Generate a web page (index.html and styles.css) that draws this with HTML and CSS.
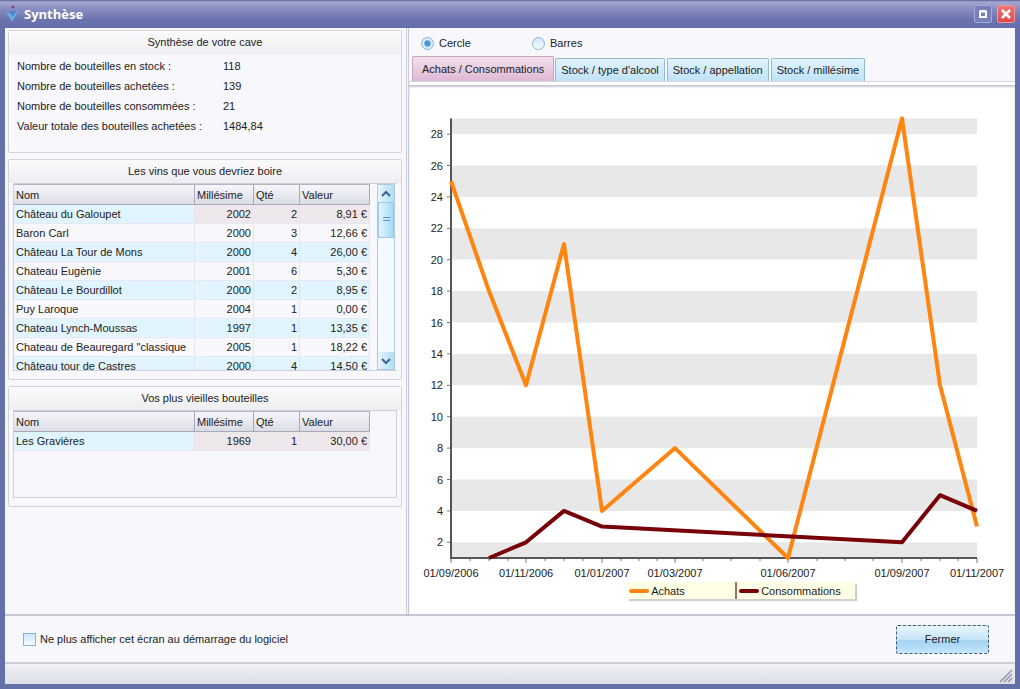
FILE: index.html
```
<!DOCTYPE html>
<html lang="fr">
<head>
  <meta charset="UTF-8" />
  <meta name="viewport" content="width=device-width, initial-scale=1.0"/>
  <title>Synthèse</title>
  <link rel="stylesheet" href="styles.css">
</head>

<body>
  <div class="window">
    <header class="titlebar">
      <svg class="logo" width="16" height="18" viewBox="0 0 16 18">
        <path d="M1 7L7 17L14 5L8 10Z" fill="#68aee4"/>
        <path d="M4 6L8 12L11 6Z" fill="#4a86cc"/>
        <circle cx="8" cy="2" r="1.5" fill="#84476f"/>
      </svg>
      <h1>Synthèse</h1>
      <button class="win-btn" aria-label="Agrandir">
        <svg width="16" height="16" viewBox="0 0 16 16"><path d="M5 5.5H11V11H5Z M5 5H11" fill="none" stroke="#fff" stroke-width="2"/></svg>
      </button>
      <button class="win-btn close" aria-label="Quitter">
        <svg width="16" height="16" viewBox="0 0 16 16"><path d="M4 4L12 12M12 4L4 12" stroke="#fff" stroke-width="2.5"/></svg>
      </button>
    </header>

    <main class="content">
      <section class="left">
        <div class="panel panel-stats">
          <h2>Synthèse de votre cave</h2>
          <dl>
            <dt>Nombre de bouteilles en stock :</dt><dd>118</dd>
            <dt>Nombre de bouteilles achetées :</dt><dd>139</dd>
            <dt>Nombre de bouteilles consommées :</dt><dd>21</dd>
            <dt>Valeur totale des bouteilles achetées :</dt><dd>1484,84</dd>
          </dl>
        </div>

        <div class="panel">
          <h2>Les vins que vous devriez boire</h2>
          <div class="list list-drink">
            <table>
              <thead>
                <tr><th class="nom">Nom</th><th class="mil">Millésime</th><th class="qte">Qté</th><th class="val">Valeur</th></tr>
              </thead>
              <tbody>
                <tr class="selected"><td>Château du Galoupet</td><td>2002</td><td>2</td><td>8,91 €</td></tr>
                <tr><td>Baron Carl</td><td>2000</td><td>3</td><td>12,66 €</td></tr>
                <tr><td>Château La Tour de Mons</td><td>2000</td><td>4</td><td>26,00 €</td></tr>
                <tr><td>Chateau Eugènie</td><td>2001</td><td>6</td><td>5,30 €</td></tr>
                <tr><td>Château Le Bourdillot</td><td>2000</td><td>2</td><td>8,95 €</td></tr>
                <tr><td>Puy Laroque</td><td>2004</td><td>1</td><td>0,00 €</td></tr>
                <tr><td>Chateau Lynch-Moussas</td><td>1997</td><td>1</td><td>13,35 €</td></tr>
                <tr><td>Chateau de Beauregard "classique</td><td>2005</td><td>1</td><td>18,22 €</td></tr>
                <tr><td>Château tour de Castres</td><td>2000</td><td>4</td><td>14,50 €</td></tr>
              </tbody>
            </table>
            <div class="scrollbar">
              <button aria-label="Monter"><svg width="10" height="8" viewBox="0 0 10 8"><path d="M1 6L5 2L9 6" fill="none" stroke="#3c6690" stroke-width="2"/></svg></button>
              <div class="thumb"></div>
              <button class="down" aria-label="Descendre"><svg width="10" height="8" viewBox="0 0 10 8"><path d="M1 2L5 6L9 2" fill="none" stroke="#3c6690" stroke-width="2"/></svg></button>
            </div>
          </div>
        </div>

        <div class="panel">
          <h2>Vos plus vieilles bouteilles</h2>
          <div class="list list-old">
            <table>
              <thead>
                <tr><th class="nom">Nom</th><th class="mil">Millésime</th><th class="qte">Qté</th><th class="val">Valeur</th></tr>
              </thead>
              <tbody>
                <tr class="selected"><td>Les Gravières</td><td>1969</td><td>1</td><td>30,00 €</td></tr>
              </tbody>
            </table>
          </div>
        </div>
      </section>

      <section class="right">
        <div class="modes">
          <label><input type="radio" name="mode" checked>Cercle</label>
          <label><input type="radio" name="mode">Barres</label>
        </div>
        <div class="tabs" role="tablist">
          <button class="active" role="tab" aria-selected="true">Achats / Consommations</button>
          <button role="tab">Stock / type d'alcool</button>
          <button role="tab">Stock / appellation</button>
          <button role="tab">Stock / millésime</button>
        </div>
        <div class="chart">
          <svg id="chart" viewBox="409 82 606 500"></svg>
          <div class="legend">
            <span class="key achats">Achats</span>
            <span class="key conso">Consommations</span>
          </div>
        </div>
      </section>
    </main>

    <footer class="actions">
      <label><input type="checkbox">Ne plus afficher cet écran au démarrage du logiciel</label>
      <button class="fermer">Fermer</button>
    </footer>
    <div class="statusbar">
      <svg width="14" height="14" viewBox="0 0 14 14"><path d="M1 13L13 1M5 13L13 5M9 13L13 9" stroke="#9297ab" stroke-width="1.5"/></svg>
    </div>
  </div>

  <script src="chart.js"></script>
</body>
</html>
```
FILE: styles.css
```
* {
  box-sizing: border-box;
}

body {
  margin: 0;
  font-family: "Liberation Sans", Arial, sans-serif;
  font-size: 11px;
  color: #222;
}

h1, h2, dl, dd {
  margin: 0;
}

button, input {
  font: inherit;
  color: inherit;
  margin: 0;
  padding: 0;
}

.window {
  min-height: 100vh;
  display: flex;
  flex-direction: column;
  background: #f8f8fc;
  border: 5px solid #6470a8;
  border-top: 0;
}

/* barre de titre */
.titlebar {
  height: 28px;
  margin: 0 -5px;
  padding: 0 5px;
  display: flex;
  align-items: center;
  gap: 3px;
  background: linear-gradient(#5c6396, #a3a8d0 2px, #8a90c2 8px, #6a72ae 20px, #656eac);
}

.titlebar h1 {
  flex: 1;
  font-family: "Open Sans", sans-serif;
  font-size: 13px;
  line-height: 26px;
  font-weight: bold;
  color: #fff;
}

.win-btn {
  width: 18px;
  height: 18px;
  display: flex;
  align-items: center;
  justify-content: center;
  border: 1px solid #a3abd6;
  border-radius: 2px;
  background: #7781b8;
}

.win-btn.close {
  margin-left: 2px;
  background: linear-gradient(#ee7777, #e04848);
  border-color: #e99;
}

.content {
  flex: 1;
  display: flex;
  border-bottom: 2px solid #c6c6d2;
}

/* colonne de gauche */
.left {
  width: 40%;
  max-width: 402px;
  flex: none;
  padding: 2px 4px 2px 3px;
  border-right: 1px solid #c9cad8;
  display: flex;
  flex-direction: column;
  gap: 6px;
}

.panel {
  border: 1px solid #d2d2de;
  border-radius: 2px;
  padding: 0 4px 8px;
}

.panel h2 {
  height: 23px;
  margin: 0 -4px;
  line-height: 22px;
  font-size: 11px;
  font-weight: normal;
  text-align: center;
  background: linear-gradient(#fbfbfd, #eeeef2);
}

.panel-stats {
  height: 123px;
}

dl {
  display: grid;
  grid-template-columns: 206px 1fr;
  padding: 2px 4px;
  line-height: 20px;
}

.list {
  display: flex;
  justify-content: space-between;
  overflow: hidden;
  border: 1px solid #d0d0dc;
}

.list-drink {
  height: 188px;
  border-right: 0;
}

.list-old {
  height: 88px;
}

table {
  width: 356px;
  height: 0;
  table-layout: fixed;
  border-collapse: separate;
  border-spacing: 0;
}

th {
  height: 21px;
  padding: 0 2px;
  font-weight: normal;
  text-align: left;
  border-right: 1px solid #a9a9bc;
  border-bottom: 1px solid #a9a9bc;
  border-top: 1px solid #b4b4c4;
  background: linear-gradient(#f6f6fa, #dcdce6);
}

.nom { width: 181px; }
.mil { width: 59px; }
.qte { width: 46px; }

td {
  height: 19px;
  padding: 0 2px;
  text-align: right;
  white-space: nowrap;
  overflow: hidden;
  border-right: 1px solid #e2e6ee;
  border-bottom: 1px solid #e6eaf0;
}

td:first-child {
  text-align: left;
}

tr:nth-child(odd) td {
  background: #e0f5ff;
}

tr.selected td + td {
  background: #eee7ec;
}

.scrollbar {
  width: 18px;
  margin-right: 2px;
  display: flex;
  flex-direction: column;
  border: 1px solid #a9cce2;
  background: #f3faff;
}

.scrollbar button {
  height: 17px;
  border: 0;
  background: linear-gradient(90deg, #e8f6ff, #b2dcf5);
}

.scrollbar .down {
  margin-top: auto;
}

.thumb {
  height: 36px;
  border: 1px solid #9cc8e4;
  background:
    linear-gradient(#5c94c0 1px, transparent 1px 3px, #5c94c0 3px 4px, transparent 4px) center / 7px 6px no-repeat,
    linear-gradient(90deg, #e4f5ff, #a4d8f6);
}

/* colonne de droite */
.right {
  flex: 1;
  min-width: 0;
  margin-left: 1px;
  border-left: 1px solid #c9cad8;
  background: linear-gradient(#f8f8fc 60px, #fff 60px);
}

.modes {
  height: 28px;
  padding: 2px 12px 0;
  display: flex;
  align-items: center;
}

.modes label {
  width: 111px;
  display: flex;
  align-items: center;
  gap: 5px;
}

input[type=radio], input[type=checkbox] {
  appearance: none;
  width: 13px;
  height: 13px;
  border: 1px solid #86b3d8;
  background: linear-gradient(#cfe8fa, #f5fbff);
}

input[type=radio] {
  border-radius: 50%;
}

input[type=radio]:checked {
  background: radial-gradient(#4d8fd0 30%, #d5ebfa 50%);
}

.tabs {
  display: flex;
  align-items: flex-end;
  gap: 2px;
  padding-left: 3px;
}

.tabs button {
  height: 23px;
  padding: 0 5px;
  white-space: nowrap;
  border: 1px solid #8fbad2;
  border-bottom: 0;
  border-radius: 2px 2px 0 0;
  background: linear-gradient(#e2f3fc, #bfe3f8);
}

.tabs .active {
  height: 25px;
  padding: 0 9px;
  margin-right: -1px;
  border-color: #c5a4be;
  background: linear-gradient(#f3e0ee, #deb8d4);
}

.chart {
  padding-bottom: 14px;
  background: #fff;
  border-top: 1px solid #d6d6e0;
  box-shadow: inset 0 3px #fff, inset 0 5px 2px #c8c8d0;
}

.chart svg {
  display: block;
  width: 100%;
}

.chart text {
  font-size: 11px;
  fill: #222;
}

.band { fill: #e8e8e8; }
.axis { stroke: #555; stroke-width: 2; fill: none; }
.tick { stroke: #777; stroke-width: 1; }
.line { fill: none; stroke-width: 4; stroke-linejoin: round; }
.line.achats { stroke: #ff8410; }
.line.conso { stroke: #780008; }

.legend {
  width: 228px;
  height: 17px;
  margin: 0 auto 0 36%;
  display: flex;
  background: #ffffe6;
  box-shadow: 2px 2px 1px #d0d0d0;
}

.key {
  flex: 1;
  display: flex;
  align-items: center;
  gap: 2px;
}

.key::before {
  content: "";
  width: 20px;
  height: 4px;
  margin-left: 2px;
  border-radius: 2px;
}

.key.achats::before { background: #ff8410; }
.key.conso::before { background: #780008; }
.key.conso { flex: none; width: 120px; border-left: 2px solid #a66a62; }

/* bas de fenetre */
.actions {
  height: 46px;
  padding: 0 26px 0 18px;
  display: flex;
  align-items: center;
  justify-content: space-between;
}

.actions label {
  display: flex;
  align-items: center;
  gap: 4px;
}

.fermer {
  width: 93px;
  height: 29px;
  border: 1px dashed #41586e;
  border-radius: 2px;
  background: linear-gradient(#eaf6fd, #c6e4f7 50%, #a4d3f2 55%, #c4e6fa);
}

.statusbar {
  height: 22px;
  padding: 5px 2px 0;
  display: flex;
  justify-content: flex-end;
  border-top: 2px solid #cfcfd9;
  background: linear-gradient(#f2f2f7, #dcdfe8);
}
```
FILE: chart.js
```
const svg = document.getElementById("chart");

const left = 451, right = 977, bottom = 558, unit = 15.7;
const y = v => bottom - (v - 1) * unit;

function add(tag, attrs, text) {
  const el = document.createElementNS("http://www.w3.org/2000/svg", tag);
  for (const k in attrs) el.setAttribute(k, attrs[k]);
  if (text) el.textContent = text;
  svg.appendChild(el);
}

// bandes grises
add("rect", { class: "band", x: left, y: y(29), width: right - left, height: unit });
add("rect", { class: "band", x: left, y: y(2), width: right - left, height: unit });
for (let v = 4; v < 28; v += 4) {
  add("rect", { class: "band", x: left, y: y(v + 2), width: right - left, height: unit * 2 });
}

// axe vertical
for (let v = 2; v <= 28; v += 2) {
  add("path", { class: "tick", d: `M${left - 4} ${y(v)}H${left}` });
  add("text", { x: left - 8, y: y(v) + 4, "text-anchor": "end" }, v);
}

// axe horizontal
const dates = {
  451: "01/09/2006", 526: "01/11/2006", 602: "01/01/2007", 675: "01/03/2007",
  788: "01/06/2007", 902: "01/09/2007", 977: "01/11/2007"
};
const minor = [470, 489, 508, 545, 564, 583, 621, 639, 657, 703, 731, 760, 817, 845, 873, 921, 940, 958];
minor.forEach(x => add("path", { class: "tick", d: `M${x} ${bottom}v3` }));
for (const x in dates) {
  add("path", { class: "tick", d: `M${x} ${bottom}v5` });
  add("text", { x: x, y: bottom + 19, "text-anchor": "middle" }, dates[x]);
}
add("path", { class: "axis", d: `M${left} ${y(29)}V${bottom}H${right}` });

function line(name, points) {
  add("polyline", { class: "line " + name, points: points.map(p => p[0] + "," + y(p[1])).join(" ") });
}

line("achats", [[451, 25], [489, 18], [526, 12], [564, 21], [602, 4], [675, 8], [788, 1], [902, 29], [940, 12], [977, 3]]);
line("conso", [[489, 1], [526, 2], [564, 4], [602, 3], [902, 2], [940, 5], [977, 4]]);
```
